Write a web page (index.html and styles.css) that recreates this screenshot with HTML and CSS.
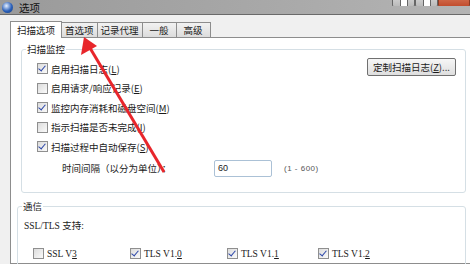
FILE: index.html
```html
<!DOCTYPE html>
<html lang="zh">
<head>
  <meta charset="UTF-8" />
  <title>选项</title>
  <link rel="stylesheet" href="styles.css">
</head>
<body>
  <div class="titlebar">
    <span class="app-icon"></span>
    <span class="title">选项</span>
    <div class="win-buttons">
      <span class="wbtn"><i class="wmin"></i></span>
      <span class="wbtn"><i class="wmax"></i></span>
      <span class="wbtn close"></span>
    </div>
  </div>

  <div class="window">
    <div class="tabs">
      <span class="tab active">扫描选项</span>
      <span class="tab">首选项</span>
      <span class="tab">记录代理</span>
      <span class="tab">一般</span>
      <span class="tab">高级</span>
    </div>

    <div class="panel">
      <fieldset class="group monitor">
        <legend>扫描监控</legend>
        <div class="monitor-body">
          <div class="checks">
            <label class="row"><span class="cb on"></span>启用扫描日志(<u>L</u>)</label>
            <label class="row"><span class="cb"></span>启用请求/响应记录(<u>E</u>)</label>
            <label class="row"><span class="cb on"></span>监控内存消耗和磁盘空间(<u>M</u>)</label>
            <label class="row"><span class="cb"></span>指示扫描是否未完成(<u>I</u>)</label>
            <label class="row"><span class="cb on"></span>扫描过程中自动保存(<u>S</u>)</label>
            <div class="row interval">
              <span class="interval-label">时间间隔（以分为单位）：</span>
              <span class="input">60</span>
              <span class="range">(1 - 600)</span>
            </div>
          </div>
          <button class="btn">定制扫描日志(<u>Z</u>)...</button>
        </div>
      </fieldset>

      <fieldset class="group comm">
        <legend>通信</legend>
        <div class="ssl-title">SSL/TLS 支持:</div>
        <div class="ssl-row">
          <label class="ssl"><span class="cb"></span>SSL V<u>3</u></label>
          <label class="ssl"><span class="cb on"></span>TLS V1.<u>0</u></label>
          <label class="ssl"><span class="cb on"></span>TLS V1.<u>1</u></label>
          <label class="ssl"><span class="cb on"></span>TLS V1.<u>2</u></label>
        </div>
      </fieldset>
    </div>
  </div>

  <svg class="arrow" width="470" height="264" viewBox="0 0 470 264">
    <line x1="164" y1="172" x2="90" y2="48" stroke="#e8262b" stroke-width="3" />
    <polygon points="84,37 81,55 97,46" fill="#e8262b" />
  </svg>
</body>
</html>
```

FILE: styles.css
```css
body {
  margin: 0;
  width: 470px;
  height: 264px;
  overflow: hidden;
  position: relative;
  background: #f0f0f0;
  font-family: "Noto Sans CJK SC", "Liberation Sans", sans-serif;
  font-size: 9.5px;
  color: #1a1a1a;
}

.titlebar {
  height: 14px;
  display: flex;
  align-items: center;
  background: linear-gradient(to right, #9a9a9a, #a9a9a9 60%, #b4b4b4);
  border-bottom: 1px solid #6a6a6a;
}
.app-icon {
  width: 11px;
  height: 11px;
  margin-left: 2px;
  border-radius: 50%;
  background: radial-gradient(circle at 40% 35%, #e6f0ff, #2a5fb8 55%, #163e80);
}
.title {
  margin-left: 6px;
  font-size: 10.5px;
  color: #111;
}
.win-buttons {
  margin-left: auto;
  display: flex;
  align-self: flex-start;
  height: 6px;
  overflow: hidden;
}
.wbtn {
  width: 21px;
  height: 12px;
  margin-top: -6px;
  border: 1px solid #666;
  border-radius: 0 0 3px 3px;
  background: linear-gradient(#d8d8d8, #b8b8b8);
  display: flex;
  justify-content: center;
}
.wbtn i {
  width: 6px;
  height: 8px;
  margin-top: 2px;
  background: #fff;
  border: 1px solid #666;
}
.wbtn.close {
  width: 30px;
  background: linear-gradient(#d87a5a, #c0492a);
  border-color: #8a3b25;
}

.window {
  padding: 7px 0 0 10px;
}

.tabs {
  display: flex;
  align-items: flex-end;
  height: 15px;
  position: relative;
  z-index: 1;
}
.tab {
  height: 14px;
  line-height: 14px;
  padding: 0 3px;
  border: 1px solid #8d8d8d;
  border-bottom: none;
  margin-right: -1px;
  background: linear-gradient(#f2f2f2, #dcdcdc);
  font-size: 9.5px;
}
.tab:nth-child(4), .tab:nth-child(5) {
  padding: 0 7px;
}
.tab.active {
  height: 16px;
  line-height: 17px;
  padding: 0 6px;
  background: #fff;
  margin-bottom: -1px;
}

.panel {
  background: #fff;
  border: 1px solid #8d8d8d;
  border-right: none;
  height: 220px;
  padding: 5px 0 0 10px;
}

.group {
  margin: 0;
  width: 445px;
  box-sizing: border-box;
  border: 1px solid #d5dfe5;
  border-radius: 3px;
  padding: 0;
}
.group legend {
  padding: 0 1px;
  margin-left: 4px;
  font-size: 9.5px;
  line-height: 12px;
}

.monitor {
  height: 150px;
}
.monitor-body {
  display: flex;
  align-items: flex-start;
  padding: 0 0 0 15px;
}
.checks {
  display: flex;
  flex-direction: column;
  padding-top: 4px;
}
.row {
  height: 19.5px;
  display: flex;
  align-items: center;
  white-space: nowrap;
}
.row u, .ssl u {
  text-decoration: underline;
}

.cb {
  width: 9px;
  height: 9px;
  margin-right: 3px;
  border: 1px solid #8f8f8f;
  background: linear-gradient(135deg, #dcdcdc, #fafafa);
  position: relative;
  flex: none;
}
.cb.on::after {
  content: "";
  position: absolute;
  left: 2px;
  top: 0;
  width: 3px;
  height: 6px;
  border: solid #2b46a8;
  border-width: 0 1.5px 1.5px 0;
  transform: rotate(40deg);
}

.interval {
  height: 23px;
  padding-left: 25px;
}
.interval-label {
  width: 152px;
}
.input {
  width: 53px;
  height: 15px;
  line-height: 15px;
  padding-left: 3px;
  border: 1px solid #abc1d6;
  border-radius: 2px;
  font-family: "Liberation Sans", sans-serif;
  font-size: 9px;
}
.range {
  margin-left: 12px;
  font-family: "Liberation Sans", sans-serif;
  font-size: 8px;
  color: #555;
  letter-spacing: 0.5px;
}

.btn {
  margin: 3px 9px 0 auto;
  height: 18px;
  padding: 0 5px;
  border: 1px solid #707070;
  border-radius: 2px;
  background: linear-gradient(#f6f6f6, #dedede);
  font-family: "Noto Sans CJK SC", sans-serif;
  font-size: 9.5px;
  color: #1a1a1a;
}

.comm {
  margin-top: 7px;
  width: 449px;
  margin-left: -4px;
  height: 70px;
}
.ssl-title {
  padding: 6px 0 0 6px;
  font-family: "Liberation Serif", "Noto Sans CJK SC", serif;
  font-size: 9.5px;
}
.ssl-row {
  display: flex;
  padding: 16px 0 0 15px;
}
.ssl {
  width: 97px;
  display: flex;
  align-items: center;
  font-family: "Liberation Serif", serif;
  font-size: 9.5px;
}
.ssl:nth-child(3) {
  width: 91px;
}

.arrow {
  position: absolute;
  left: 0;
  top: 0;
  pointer-events: none;
}
```
